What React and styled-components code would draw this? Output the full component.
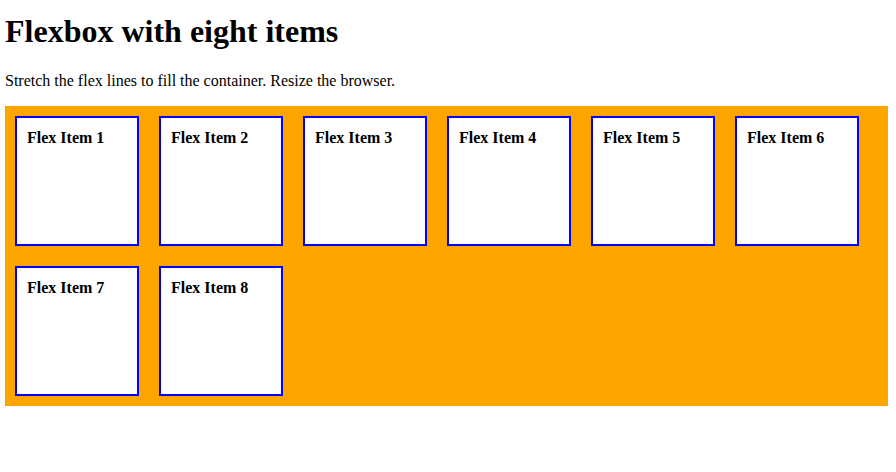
import React from 'react';
import styled, { createGlobalStyle } from 'styled-components';

const GlobalStyle = createGlobalStyle`
  body {
    margin: 0 8px 0 5px;
    font-family: "Liberation Serif", "Times New Roman", serif;
    background: #ffffff;
    color: #000000;
  }
`;

const Title = styled.h1`
  font-size: 32px;
  font-weight: bold;
  margin: 13px 0 22px;
  line-height: normal;
`;

const Intro = styled.p`
  font-size: 16px;
  margin: 0 0 16px;
`;

const FlexContainer = styled.div`
  display: flex;
  flex-wrap: wrap;
  align-content: stretch;
  background-color: orange;
  height: 300px;
`;

const FlexItem = styled.div`
  width: 100px;
  height: 105px;
  margin: 10px;
  padding: 11px 10px 10px;
  border: 2px solid blue;
  background-color: #ffffff;
  font-size: 16px;
  font-weight: bold;
`;

const items = [1, 2, 3, 4, 5, 6, 7, 8];

function App() {
  return (
    <>
      <GlobalStyle />
      <Title>Flexbox with eight items</Title>
      <Intro>Stretch the flex lines to fill the container. Resize the browser.</Intro>
      <FlexContainer>
        {items.map((n) => (
          <FlexItem key={n}>Flex Item {n}</FlexItem>
        ))}
      </FlexContainer>
    </>
  );
}

export default App;
